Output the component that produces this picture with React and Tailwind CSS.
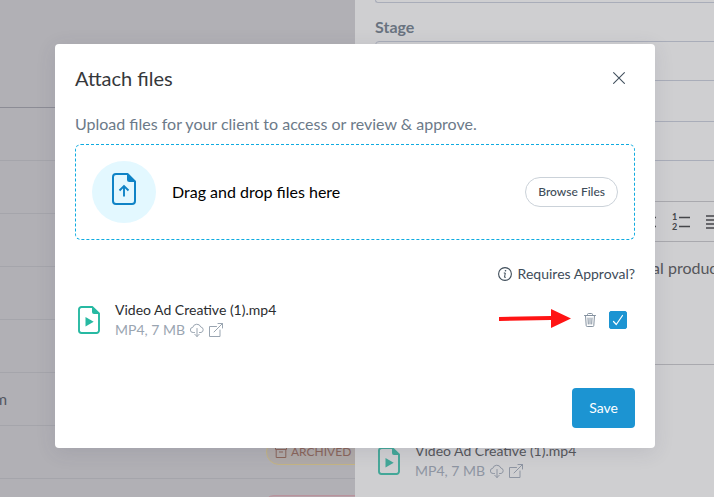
import { useState } from "react";

const boardRows = [
  { id: 1 },
  { id: 2 },
  { id: 3 },
  { id: 4 },
  { id: 5 },
  { id: 6, label: "m" },
  { id: 7, badge: "archived" },
  { id: 8, badge: "declined" },
];

const file = { name: "Video Ad Creative (1).mp4", meta: "MP4, 7 MB" };

function CloseIcon() {
  return (
    <svg width="12" height="12" viewBox="0 0 12 12" fill="none" stroke="currentColor" strokeWidth="1.1" strokeLinecap="round" aria-hidden="true">
      <path d="M0.6 0.6 11.4 11.4M11.4 0.6 0.6 11.4" />
    </svg>
  );
}

function UploadFileIcon() {
  return (
    <svg width="24" height="32" viewBox="0 0 24 32" fill="none" stroke="#0f83c6" strokeWidth="2" aria-hidden="true">
      <path d="M4 1h11.5L23 8.5V28a3 3 0 0 1-3 3H4a3 3 0 0 1-3-3V4a3 3 0 0 1 3-3z" strokeLinejoin="round" />
      <path d="M15 1v5.5A2.5 2.5 0 0 0 17.5 9H23z" fill="#0f83c6" stroke="none" />
      <path d="M12 23.5V13M7.5 17.5 12 13l4.5 4.5" strokeWidth="1.9" />
    </svg>
  );
}

function VideoFileIcon() {
  return (
    <svg width="22" height="28" viewBox="0 0 22 28" fill="none" stroke="currentColor" strokeWidth="1.9" aria-hidden="true">
      <path d="M3.5 1h10.7L21 7.5v17a2.5 2.5 0 0 1-2.5 2.5h-15A2.5 2.5 0 0 1 1 24.5v-21A2.5 2.5 0 0 1 3.5 1z" strokeLinejoin="round" />
      <path d="M14 1v5a2 2 0 0 0 2 2h5z" fill="currentColor" stroke="none" />
      <path d="M7.5 11v9.5l8.2-4.7z" fill="currentColor" stroke="none" />
    </svg>
  );
}

function CloudDownloadIcon() {
  return (
    <svg width="14" height="14" viewBox="0 0 14 14" fill="none" stroke="currentColor" strokeLinecap="round" strokeLinejoin="round" aria-hidden="true">
      <path d="M4.5 9.5H3.2a2.6 2.6 0 0 1-.4-5.2A4.2 4.2 0 0 1 10.8 4a2.8 2.8 0 0 1 .2 5.5H9.5" />
      <path d="M7 5.5v8M4.8 11.3 7 13.5l2.2-2.2" />
    </svg>
  );
}

function ExternalIcon() {
  return (
    <svg width="14" height="14" viewBox="0 0 14 14" fill="none" stroke="currentColor" strokeLinecap="round" strokeLinejoin="round" aria-hidden="true">
      <path d="M7.5 3.5h-7v10h10.5V7" />
      <path d="M5 9 13.5.5M9 .5h4.5V5" />
    </svg>
  );
}

function TrashIcon() {
  return (
    <svg width="12" height="14" viewBox="0 0 12 14" fill="none" stroke="currentColor" strokeLinecap="round" strokeLinejoin="round" aria-hidden="true">
      <path d="M.5 2.5h11M3.5 2.5v-1a1 1 0 0 1 1-1h3a1 1 0 0 1 1 1v1M1.5 2.5l.7 10a1 1 0 0 0 1 1h5.600a1 1 0 0 0 1-1l.7-10" />
      <path d="M4 5l.3 6M6 5v6M8 5l-.3 6" />
    </svg>
  );
}

function InfoIcon() {
  return (
    <svg width="14" height="14" viewBox="0 0 14 14" fill="none" stroke="currentColor" aria-hidden="true">
      <circle cx="7" cy="7" r="6.4" strokeWidth="1.1" />
      <path d="M5.8 6h1.5l-.8 4.300h1.300" />
      <circle cx="7.5" cy="3.8" r=".8" fill="currentColor" stroke="none" />
    </svg>
  );
}

function ArchiveIcon() {
  return (
    <svg width="12" height="12" viewBox="0 0 12 12" fill="none" stroke="currentColor" strokeLinejoin="round" aria-hidden="true">
      <path d="M.5.5h11v3H.5zM1.2 3.5v8h9.600v-8M4 6h4" />
    </svg>
  );
}

function FileDetails({ nameClass, metaClass, iconClass }) {
  return (
    <div className="flex items-center gap-[15px]">
      <span className={iconClass}>
        <VideoFileIcon />
      </span>
      <div className="text-sm leading-5">
        <p className={nameClass}>{file.name}</p>
        <div className={`flex items-center gap-[5px] ${metaClass}`}>
          <span className="whitespace-nowrap">{file.meta}</span>
          <button type="button" aria-label="Download">
            <CloudDownloadIcon />
          </button>
          <button type="button" aria-label="Open in new tab">
            <ExternalIcon />
          </button>
        </div>
      </div>
    </div>
  );
}

function Board() {
  return (
    <div className="w-[355px] shrink-0 overflow-hidden bg-[#b1b0b5]">
      <div className="h-[108px] border-b border-[#8c8c95]" />
      {boardRows.map((row) => (
        <div key={row.id} className="flex h-[53px] items-center border-b border-[#a5a5ab]">
          {row.label && <span className="-ml-1.5 text-base text-[#555963]">{row.label}</span>}
          {row.badge === "archived" && (
            <span className="ml-[266px] flex h-[26px] w-32 shrink-0 items-center gap-1 rounded-full border border-[#c5b583] bg-[#b0aaa8] pl-2 text-xs text-[#8a655a]">
              <ArchiveIcon />
              ARCHIVED
            </span>
          )}
          {row.badge === "declined" && (
            <span className="ml-[264px] h-5 w-32 shrink-0 rounded-full border border-[#b9929c] bg-[#b5a3aa]" />
          )}
        </div>
      ))}
    </div>
  );
}

function DetailPanel() {
  return (
    <div className="min-w-0 flex-1 overflow-hidden bg-[#cfcfd1] pl-5">
      <div className="h-[3px] w-[400px] rounded-bl border-b border-l border-[#a9adb9]" />
      <label htmlFor="stage" className="mt-3 mb-0.5 block h-6 text-base leading-6 font-bold whitespace-nowrap text-[#697380]">
        Stage
      </label>
      <input id="stage" className="block h-10 w-[400px] rounded border border-[#a9adb9]" />
      <input aria-label="Due date" className="mt-10 block h-10 w-[400px] rounded border border-[#a9adb9]" />
      <div className="mt-10 h-[164px] w-[400px] rounded border border-[#a9a9ae]">
        <div className="flex h-10 items-center border-b border-[#a9a9ae] pl-[261px] text-[#45464a]">
          <button type="button" aria-label="Bulleted list">
            <svg width="19" height="16" viewBox="0 0 19 16" fill="none" stroke="currentColor" strokeWidth="1.5" aria-hidden="true">
              <path d="M7 3.5h12M7 12.5h12M1 3.5h2M1 12.5h2" />
            </svg>
          </button>
          <button type="button" aria-label="Numbered list" className="ml-4 flex items-center gap-0.5">
            <span className="flex flex-col text-[9px] leading-[10px] font-bold">
              <span>1</span>
              <span>2</span>
            </span>
            <svg width="11" height="16" viewBox="0 0 11 16" fill="none" stroke="currentColor" strokeWidth="1.5" aria-hidden="true">
              <path d="M0 3.5h11M0 12.5h11" />
            </svg>
          </button>
          <button type="button" aria-label="Align" className="ml-4">
            <svg width="18" height="16" viewBox="0 0 18 16" fill="none" stroke="currentColor" strokeWidth="1.5" aria-hidden="true">
              <path d="M0 2h18M0 6h18M0 10h18M0 14h18" />
            </svg>
          </button>
        </div>
        <p className="pt-3.5 pl-[258px] text-base leading-6 whitespace-nowrap text-[#55565a]">final product</p>
      </div>
      <div className="mt-[76px]">
        <FileDetails
          iconClass="ml-[3px] text-[#43a798]"
          nameClass="whitespace-nowrap text-[#55565a]"
          metaClass="text-[#8e95a2]"
        />
      </div>
    </div>
  );
}

function AttachFilesDialog() {
  const [approval, setApproval] = useState(true);

  return (
    <div
      role="dialog"
      aria-modal="true"
      aria-labelledby="attach-title"
      className="w-full rounded bg-white p-5 shadow-[0_4px_20px_rgba(60,60,90,0.12)]"
    >
      <div className="flex items-center justify-between pr-2.5">
        <h2 id="attach-title" className="text-xl leading-7 text-[#36383b]">
          Attach files
        </h2>
        <button type="button" aria-label="Close" className="text-[#43515f]">
          <CloseIcon />
        </button>
      </div>

      <p className="mt-5 text-base leading-6 text-[#6c7a89]">
        Upload files for your client to access or review &amp; approve.
      </p>

      {/* Drop zone */}
      <div className="mt-2 flex h-24 items-center gap-4 rounded-md border border-dashed border-[#0fabe0] p-4">
        <div className="flex w-16 items-center justify-center self-stretch rounded-[50%] bg-[#e3f8ff] pb-1.5">
          <UploadFileIcon />
        </div>
        <p className="flex-1 text-base text-black">Drag and drop files here</p>
        <button
          type="button"
          className="h-[30px] rounded-full border border-[#cbd2d9] px-3 text-xs font-medium text-[#3e4c59]"
        >
          Browse Files
        </button>
      </div>

      <div className="mt-6 flex items-center justify-end gap-1.5 text-sm leading-5 text-[#3e4c59]">
        <InfoIcon />
        <label htmlFor="approval">Requires Approval?</label>
      </div>

      {/* Attached file */}
      <div className="mt-4 flex items-center justify-between">
        <FileDetails
          iconClass="ml-[3px] text-[#27b9a2]"
          nameClass="text-[#2b2d30]"
          metaClass="text-[#9aa5b1]"
        />
        <div className="flex items-center pr-2">
          <svg width="72" height="22" viewBox="0 0 72 22" aria-hidden="true">
            <path d="M0 8 52 7V0L72 9.5 52 19V11L0 12z" fill="#ff1414" />
          </svg>
          <button type="button" aria-label="Delete file" className="ml-[13px] text-[#8592a0]">
            <TrashIcon />
          </button>
          <span className="ml-[13px] grid size-[18px]">
            <input
              id="approval"
              type="checkbox"
              checked={approval}
              onChange={(e) => setApproval(e.target.checked)}
              className="col-start-1 row-start-1 size-[18px] appearance-none rounded-xs border border-[#1c94d2] checked:bg-[#1c94d2]"
            />
            {approval && (
              <svg
                width="18"
                height="18"
                viewBox="0 0 18 18"
                fill="none"
                stroke="white"
                strokeWidth="1.2"
                strokeLinecap="round"
                strokeLinejoin="round"
                className="pointer-events-none col-start-1 row-start-1"
                aria-hidden="true"
              >
                <path d="M4.5 10.5 7.3 13.5 13.5 4.5" />
              </svg>
            )}
          </span>
        </div>
      </div>

      <div className="mt-12 flex justify-end">
        <button type="button" className="h-10 rounded bg-[#1c94d2] px-[17px] text-sm text-white">
          Save
        </button>
      </div>
    </div>
  );
}

export default function App() {
  return (
    <div className="relative h-screen overflow-hidden font-[Lato,sans-serif]">
      <div className="flex h-full">
        <Board />
        <DetailPanel />
      </div>
      <div className="absolute inset-0 flex items-start pt-11 pr-[59px] pl-[55px]">
        <AttachFilesDialog />
      </div>
    </div>
  );
}
